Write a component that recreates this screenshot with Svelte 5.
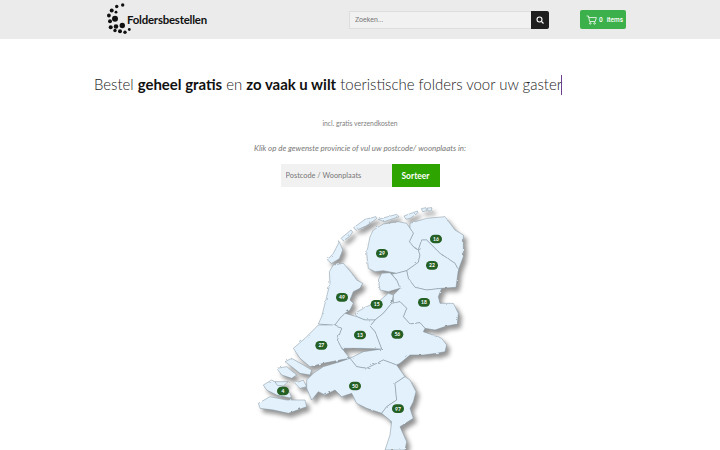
<script>
  // provinces, in thirds of a pixel
  const provinces = [
    { name: "Groningen", d: "M480,70 L530,55 L585,50 L600,70 L615,90 L640,105 L640,170 L625,210 L615,190 L570,160 L530,120 L515,120 L505,150 L490,140 L478,125 L490,100 L480,85 Z" },
    { name: "Friesland", d: "M350,160 L360,110 L370,90 L400,72 L445,65 L470,70 L480,85 L490,100 L478,125 L490,140 L505,150 L510,165 L505,187 L470,212 L440,220 L400,212 L375,215 L355,205 Z" },
    { name: "Drenthe", d: "M515,120 L530,120 L570,160 L615,190 L625,210 L618,262 L575,265 L530,270 L495,262 L475,235 L470,212 L505,187 L510,165 L505,150 Z" },
    { name: "Overijssel", d: "M440,220 L470,212 L475,235 L495,262 L530,270 L575,265 L565,290 L570,310 L610,310 L625,340 L622,372 L590,378 L555,390 L525,385 L510,368 L480,372 L460,350 L470,325 L450,305 L430,310 L430,285 L450,265 L440,240 L425,222 Z" },
    { name: "Flevoland N", d: "M385,240 L395,220 L420,218 L440,240 L450,265 L415,275 L390,270 Z" },
    { name: "Flevoland Z", d: "M315,340 L345,322 L385,305 L415,280 L430,285 L425,310 L400,340 L375,360 L345,360 L320,350 Z" },
    { name: "Gelderland", d: "M400,340 L425,310 L450,305 L470,325 L460,350 L480,372 L510,368 L525,385 L520,395 L575,415 L590,435 L585,455 L560,460 L520,465 L480,465 L450,490 L440,495 L400,480 L350,505 L320,500 L300,475 L340,455 L395,447 L375,395 L360,378 L375,360 Z" },
    { name: "Noord-Holland", d: "M250,195 L280,190 L310,225 L320,240 L338,250 L330,265 L310,275 L300,300 L310,310 L300,330 L285,340 L270,355 L255,375 L240,375 L205,372 L215,350 L230,290 L240,250 L238,215 Z" },
    { name: "Utrecht", d: "M285,340 L320,350 L345,360 L375,360 L360,378 L375,395 L395,447 L330,445 L275,445 L262,420 L275,385 L255,375 L270,355 Z" },
    { name: "Zuid-Holland", d: "M130,445 L165,415 L205,375 L240,375 L255,375 L275,385 L262,420 L275,445 L300,475 L270,480 L220,490 L180,500 L150,475 Z" },
    { name: "Noord-Brabant", d: "M170,540 L190,520 L220,500 L270,485 L300,475 L320,500 L350,505 L400,480 L440,495 L465,530 L435,550 L440,600 L410,620 L395,640 L350,625 L320,610 L305,580 L275,590 L255,570 L225,585 L205,575 L185,600 L170,565 Z" },
    { name: "Limburg", d: "M465,530 L480,540 L498,575 L490,605 L480,625 L490,655 L450,680 L470,725 L465,750 L405,750 L420,705 L425,665 L395,640 L410,620 L440,600 L435,550 Z" },
    { name: "Goeree", d: "M105,485 L125,475 L160,495 L185,510 L180,525 L150,520 L125,500 Z" },
    { name: "Schouwen", d: "M80,505 L110,500 L140,525 L125,535 L95,525 Z" },
    { name: "Walcheren", d: "M40,555 L65,540 L100,560 L120,580 L125,595 L80,585 L50,570 Z" },
    { name: "Vlaanderen", d: "M25,610 L60,590 L110,600 L165,600 L170,620 L115,640 L70,630 L30,625 Z" },
    { name: "Tholen", d: "M135,550 L160,540 L170,560 L150,565 Z" },
    { name: "Beveland", d: "M75,545 L115,545 L100,558 L82,556 Z" },
    { name: "Texel", d: "M232,180 L250,160 L268,125 L278,150 L268,176 L245,190 Z" },
    { name: "Vlieland", d: "M273,115 L303,90 L308,96 L298,110 L280,122 Z" },
    { name: "Terschelling", d: "M311,83 L345,58 L378,50 L380,56 L348,78 L318,91 Z" },
    { name: "Ameland", d: "M385,58 L440,43 L447,50 L402,65 Z" },
    { name: "Schiermonnikoog", d: "M462,48 L502,33 L504,38 L482,54 L468,58 Z" },
    { name: "Rottum", d: "M514,26 L528,23 L530,32 L518,35 Z" },
    { name: "Rottumeroog", d: "M532,24 L546,23 L544,32 L534,33 Z" },
  ];

  const badges = [
    { n: 16, x: 558, y: 117 },
    { n: 29, x: 396, y: 160 },
    { n: 22, x: 546, y: 196 },
    { n: 49, x: 276, y: 292 },
    { n: 15, x: 380, y: 313 },
    { n: 18, x: 522, y: 307 },
    { n: 13, x: 330, y: 405 },
    { n: 56, x: 442, y: 403 },
    { n: 27, x: 214, y: 436 },
    { n: 50, x: 315, y: 558 },
    { n: 4, x: 99, y: 573 },
    { n: 97, x: 444, y: 626 },
  ];

  // dots of the logo
  const dots = [
    [15.7, 2, 1.7], [9.7, 3.5, 1.7], [4.7, 7.5, 2], [9, 9.2, 1.4], [1.9, 12.5, 1.9], [8, 15.8, 3],
    [3, 18.2, 2], [3.7, 24.2, 2], [9, 23.5, 2.3], [15.3, 22.5, 2.7], [8, 27.5, 1.7], [13, 28.2, 2],
    [18, 29.2, 1.7], [22.3, 26.5, 1.4],
  ];
</script>

<div class="page">
  <header class="topbar">
    <a class="logo" href="#top">
      <svg class="logo-mark" width="26" height="34" viewBox="0 0 26 34">
        {#each dots as [x, y, r]}
          <circle cx={x} cy={y} {r} fill="#111" />
        {/each}
      </svg>
      <span class="logo-text">Foldersbestellen</span>
    </a>

    <form class="search">
      <input type="text" placeholder="Zoeken..." />
      <button type="button" aria-label="Zoeken">
        <svg width="8" height="8" viewBox="0 0 16 16" fill="none" stroke="#fff" stroke-width="2.2">
          <circle cx="7" cy="7" r="5" />
          <path d="M11 11l4 4" />
        </svg>
      </button>
    </form>

    <button class="cart" type="button">
      <svg width="11" height="10" viewBox="0 0 18 16" fill="none" stroke="#fff" stroke-width="1.3">
        <path d="M1 1.5h3l2 9h9l2-6.5H4.6" />
        <circle cx="7" cy="13.6" r="1.3" />
        <circle cx="14" cy="13.6" r="1.3" />
      </svg>
      <span class="count">0</span>
      <span>items</span>
    </button>
  </header>

  <main class="content">
    <h1>Bestel <b>geheel gratis</b> en <b>zo vaak u wilt</b> toeristische folders voor uw gaster<span class="caret"></span></h1>
    <p class="small">incl. gratis verzendkosten</p>
    <p class="hint">Klik op de gewenste provincie of vul uw postcode/ woonplaats in:</p>

    <form class="sort">
      <input type="text" placeholder="Postcode / Woonplaats" />
      <button type="button">Sorteer</button>
    </form>

    <svg class="map" width="240" height="250" viewBox="0 0 720 750">
      <defs>
        <filter id="shade" x="-10%" y="-10%" width="125%" height="125%" color-interpolation-filters="sRGB">
          <feTurbulence type="fractalNoise" baseFrequency="0.07" numOctaves="2" seed="4" result="noise" />
          <feDisplacementMap in="SourceGraphic" in2="noise" scale="7" result="rough" />
          <feDropShadow in="rough" dx="10" dy="12" stdDeviation="7" flood-color="#000" flood-opacity="0.42" />
        </filter>
      </defs>
      <g filter="url(#shade)">
        {#each provinces as p}
          <path class="province" d={p.d}><title>{p.name}</title></path>
        {/each}
      </g>
      {#each badges as b}
        <rect class="pill" x={b.x - 18} y={b.y - 13} width="36" height="26" rx="13" />
        <text class="pill-text" x={b.x} y={b.y + 5.5}>{b.n}</text>
      {/each}
    </svg>
  </main>
</div>

<style>
  :global(body) {
    margin: 0;
    background: #fff;
    font-family: Lato, sans-serif;
    color: #333;
  }

  .page {
    width: 720px;
    height: 450px;
    overflow: hidden;
  }

  /* --- header --- */
  .topbar {
    display: flex;
    align-items: center;
    height: 39px;
    padding-left: 107px;
    background: #ebebeb;
    box-sizing: border-box;
  }

  .logo {
    display: flex;
    align-items: center;
    width: 242px;
    color: #111;
    text-decoration: none;
  }

  .logo-mark {
    margin-right: -6px;
    flex-shrink: 0;
  }

  .logo-text {
    font-family: Lato, sans-serif;
    font-weight: 700;
    font-size: 11.4px;
    letter-spacing: -0.2px;
  }

  .search {
    display: flex;
    width: 200px;
    height: 18px;
    margin-right: 31px;
  }

  .search input {
    flex: 1;
    min-width: 0;
    padding: 0 5px;
    border: 1px solid #ddd;
    border-right: none;
    background: #f1f1f1;
    font-family: Roboto, sans-serif;
    font-size: 7px;
    box-sizing: border-box;
  }

  .search input::placeholder {
    color: #777;
  }

  .search button {
    display: flex;
    align-items: center;
    justify-content: center;
    width: 18px;
    padding: 0;
    border: none;
    border-radius: 0 2px 2px 0;
    background: #1f1f1f;
  }

  .cart {
    display: flex;
    align-items: center;
    gap: 2px;
    width: 46px;
    height: 19px;
    padding: 0 0 0 6px;
    border: none;
    border-radius: 2px;
    background: #3cb04a;
    color: #fff;
    font-family: Roboto, sans-serif;
    font-weight: 500;
    font-size: 6.5px;
    box-sizing: border-box;
    white-space: nowrap;
  }

  .count {
    margin-right: 2px;
  }

  /* --- main --- */
  .content {
    display: flex;
    flex-direction: column;
    align-items: center;
  }

  h1 {
    align-self: flex-start;
    margin: 32px 0 0 94px;
    font-size: 14.95px;
    font-weight: 300;
    line-height: 26px;
    white-space: nowrap;
    color: #222;
  }

  h1 b {
    font-weight: 700;
    color: #111;
  }

  .caret {
    display: inline-block;
    width: 1px;
    height: 20px;
    margin-left: -1px;
    vertical-align: -5px;
    background: #6b3f8f;
  }

  .small {
    margin: 20px 0 0;
    font-size: 6.8px;
    line-height: 12px;
    color: #808080;
  }

  .hint {
    margin: 12px 0 0;
    font-size: 7.9px;
    font-style: italic;
    line-height: 14px;
    color: #777;
  }

  .sort {
    display: flex;
    height: 23px;
    margin-top: 9px;
  }

  .sort input {
    width: 111px;
    padding: 0 5px;
    border: none;
    background: #f1f1f1;
    font-family: Lato, sans-serif;
    font-size: 7.4px;
    box-sizing: border-box;
  }

  .sort input::placeholder {
    color: #777;
  }

  .sort button {
    width: 48px;
    padding: 0;
    border: none;
    background: #2ea400;
    color: #fff;
    font-family: Lato, sans-serif;
    font-weight: 700;
    font-size: 8.5px;
  }

  .map {
    display: block;
    flex-shrink: 0;
    margin: 13px 0 0 20px;
  }

  .province {
    fill: #e3f1fc;
    stroke: #7f909c;
    stroke-width: 1.5;
    stroke-linejoin: round;
  }

  .pill {
    fill: #245f24;
  }

  .pill-text {
    fill: #fff;
    font-family: Lato, sans-serif;
    font-weight: 700;
    font-size: 15px;
    text-anchor: middle;
  }
</style>
